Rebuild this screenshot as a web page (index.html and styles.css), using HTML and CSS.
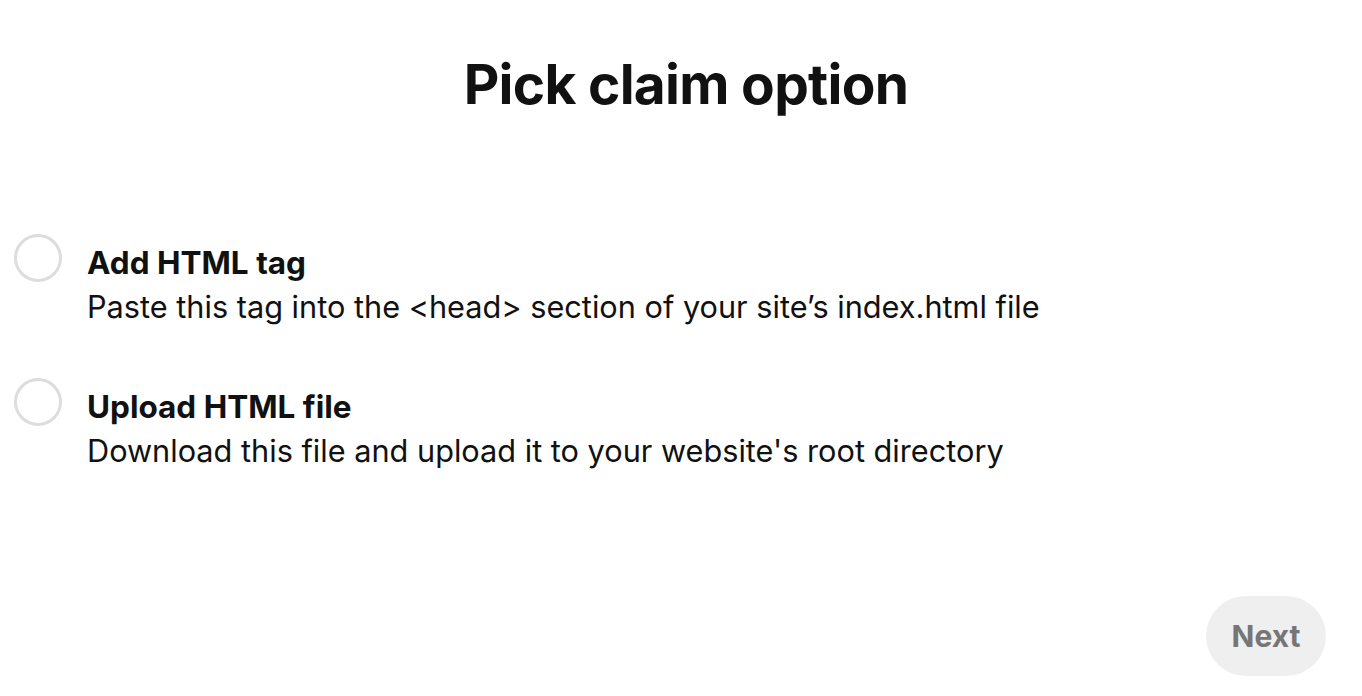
FILE: index.html
```html
<!DOCTYPE html>
<html lang="en">
<head>
    <meta charset="UTF-8">
    <title>Pick claim option</title>
    <link rel="stylesheet" href="styles.css">
</head>
<body>
    <div class="claim-page">
        <h1 class="claim-title">Pick claim option</h1>

        <div class="options">
            <label class="option">
                <input type="radio" name="claim" class="option-radio">
                <div class="option-text">
                    <div class="option-name">Add HTML tag</div>
                    <div class="option-desc">Paste this tag into the &lt;head&gt; section of your site’s index.html file</div>
                </div>
            </label>
            <label class="option">
                <input type="radio" name="claim" class="option-radio">
                <div class="option-text">
                    <div class="option-name">Upload HTML file</div>
                    <div class="option-desc">Download this file and upload it to your website's root directory</div>
                </div>
            </label>
        </div>

        <div class="footer">
            <button class="next-btn" disabled>Next</button>
        </div>
    </div>
</body>
</html>
```

FILE: styles.css
```css
* {
    margin: 0;
    padding: 0;
    box-sizing: border-box;
}

body {
    font-family: Inter, "Helvetica Neue", sans-serif;
    color: #111111;
    background: #ffffff;
}

.claim-page {
    display: flex;
    flex-direction: column;
    height: 696px;
    padding: 0 36px 20px 14px;
}

.claim-title {
    text-align: center;
    font-size: 55px;
    font-weight: 700;
    line-height: 68px;
    margin-top: 50px;
    padding-left: 32px;
    letter-spacing: -0.7px;
}

.options {
    display: flex;
    flex-direction: column;
    gap: 49px;
    margin-top: 116px;
}

.option {
    display: flex;
    align-items: flex-start;
    gap: 25px;
    cursor: pointer;
}

.option-radio {
    appearance: none;
    width: 48px;
    height: 48px;
    border: 3px solid #dddddd;
    border-radius: 50%;
    flex-shrink: 0;
    cursor: pointer;
}

.option-text {
    padding-top: 7px;
}

.option-name {
    font-size: 31.5px;
    font-weight: 700;
    line-height: 44px;
}

.option-desc {
    font-size: 30.7px;
    font-weight: 400;
    line-height: 44px;
}

.footer {
    margin-top: auto;
    display: flex;
    justify-content: flex-end;
}

.next-btn {
    font-family: inherit;
    font-size: 30px;
    font-weight: 700;
    color: #767676;
    background: #efefef;
    border: none;
    border-radius: 40px;
    width: 120px;
    height: 80px;
}
```
